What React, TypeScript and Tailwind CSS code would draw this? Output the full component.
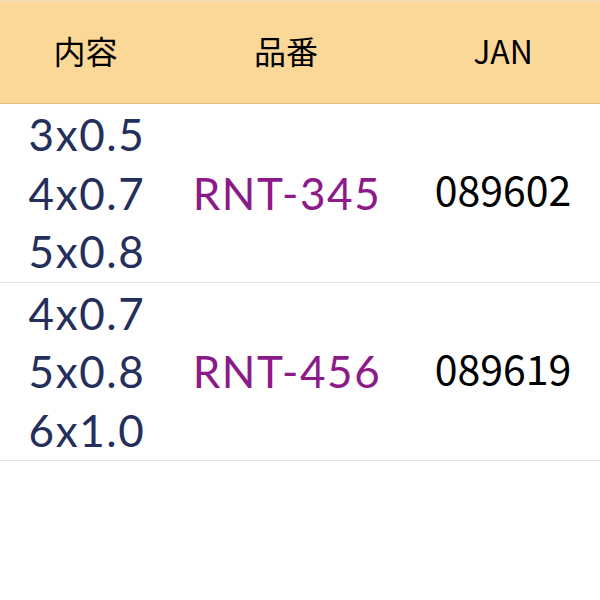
const rows = [
  { sizes: ['3x0.5', '4x0.7', '5x0.8'], code: 'RNT-345', jan: '089602' },
  { sizes: ['4x0.7', '5x0.8', '6x1.0'], code: 'RNT-456', jan: '089619' },
];

const cols = 'grid grid-cols-[172px_228px_1fr]';

export default function App() {
  return (
    <div className="w-[600px] h-[600px] bg-white font-['Lato','Noto_Sans_CJK_JP',sans-serif]">
      <div
        className={`${cols} h-[104px] items-center pb-[6px] bg-[#fcd898] border-t-2 border-t-[#f1dcb4] border-b border-b-[#dcc08a] font-['Noto_Sans_CJK_JP',sans-serif] text-[32px] text-black`}
      >
        <div className="text-center pr-[1px]">内容</div>
        <div className="text-center">品番</div>
        <div className="text-center pl-[6px]">JAN</div>
      </div>
      {rows.map((row) => (
        <div key={row.code} className={`${cols} items-center border-b border-[#e3e3e3] py-[1px]`}>
          <div className="flex flex-col items-center pl-[2px] text-[44px] tracking-[1.6px] leading-[58.5px] text-[#252f5c]">
            {row.sizes.map((s) => (
              <span key={s}>{s}</span>
            ))}
          </div>
          <div className="text-center pl-[2px] text-[44px] tracking-[1.6px] text-[#8c1a89]">{row.code}</div>
          <div className="text-center pl-[6px] pb-[8px] font-['Noto_Sans_CJK_JP',sans-serif] text-[41px] leading-none text-black">
            {row.jan}
          </div>
        </div>
      ))}
    </div>
  );
}
